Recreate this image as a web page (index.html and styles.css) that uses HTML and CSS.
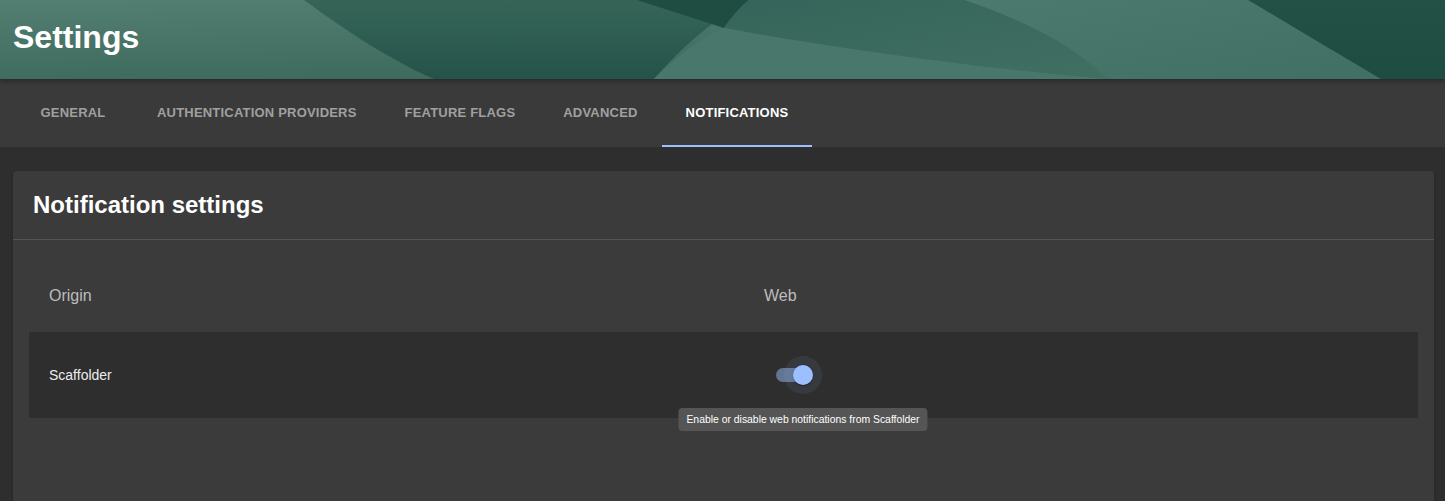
FILE: index.html
```html
<!DOCTYPE html>
<html lang="en">
<head>
<meta charset="utf-8">
<title>Settings</title>
<link rel="stylesheet" href="styles.css">
</head>
<body>
<header class="hero">
  <svg class="hero-bg" viewBox="0 0 1445 79" preserveAspectRatio="none" aria-hidden="true">
    <defs>
      <linearGradient id="g-base" x1="0" y1="0" x2="0.35" y2="1">
        <stop offset="0" stop-color="#537f73"/>
        <stop offset="1" stop-color="#3e695d"/>
      </linearGradient>
      <linearGradient id="g-band" x1="0" y1="0" x2="0" y2="1">
        <stop offset="0" stop-color="#366558"/>
        <stop offset="1" stop-color="#25534a"/>
      </linearGradient>
      <linearGradient id="g-mid" x1="0" y1="0" x2="1" y2="1">
        <stop offset="0" stop-color="#35645a"/>
        <stop offset="1" stop-color="#416f62"/>
      </linearGradient>
      <linearGradient id="g-light" x1="0" y1="0" x2="1" y2="1">
        <stop offset="0" stop-color="#4d7a6e"/>
        <stop offset="1" stop-color="#426f63"/>
      </linearGradient>
      <linearGradient id="g-dark" x1="0" y1="0" x2="0" y2="1">
        <stop offset="0" stop-color="#235145"/>
        <stop offset="1" stop-color="#1e4c40"/>
      </linearGradient>
    </defs>
    <rect x="0" y="0" width="1445" height="79" fill="url(#g-base)"/>
    <path d="M304,0 C345,30 390,60 434,79 L654,79 C678,52 706,24 749,0 Z" fill="url(#g-band)"/>
    <path d="M637,0 L724,28 C731,18 739,8 749,0 Z" fill="#1f4d41"/>
    <path d="M749,0 L965,0 C1030,22 1080,50 1107,79 C980,68 830,48 724,28 C731,18 739,8 749,0 Z" fill="url(#g-mid)"/>
    <path d="M724,28 C830,48 980,68 1107,79 L654,79 C674,58 698,40 724,28 Z" fill="#4a776b"/>
    <path d="M965,0 L1248,0 C1290,25 1340,55 1381,79 L1107,79 C1080,50 1030,22 965,0 Z" fill="url(#g-light)"/>
    <path d="M1248,0 L1445,0 L1445,79 L1381,79 C1340,55 1290,25 1248,0 Z" fill="url(#g-dark)"/>
  </svg>
  <h1 class="hero-title">Settings</h1>
</header>

<nav class="tabs">
  <div class="tab">General</div>
  <div class="tab">Authentication Providers</div>
  <div class="tab">Feature Flags</div>
  <div class="tab">Advanced</div>
  <div class="tab tab-active">Notifications</div>
</nav>

<main class="content">
  <section class="card">
    <div class="card-header">
      <h2 class="card-title">Notification settings</h2>
    </div>
    <div class="card-body">
      <div class="table">
        <div class="table-head">
          <div class="cell head-cell">Origin</div>
          <div class="cell head-cell">Web</div>
        </div>
        <div class="table-row">
          <div class="cell body-cell">Scaffolder</div>
          <div class="cell body-cell">
            <span class="switch">
              <span class="switch-track"></span>
              <span class="switch-halo"></span>
              <span class="switch-thumb"></span>
              <span class="tooltip">Enable or disable web notifications from Scaffolder</span>
            </span>
          </div>
        </div>
      </div>
    </div>
  </section>
</main>
</body>
</html>
```

FILE: styles.css
```css
* {
  box-sizing: border-box;
}

html, body {
  margin: 0;
  padding: 0;
  height: 100%;
}

body {
  background: #2e2e2e;
  font-family: "Liberation Sans", Arial, sans-serif;
  color: #ffffff;
  overflow: hidden;
}

.hero {
  position: relative;
  height: 79px;
  padding: 21px 13px 0;
  z-index: 2;
  box-shadow: 0 2px 5px rgba(0, 0, 0, 0.35);
  overflow: hidden;
}

.hero-bg {
  position: absolute;
  inset: 0;
  width: 100%;
  height: 100%;
  display: block;
}

.hero-title {
  position: relative;
  margin: 0;
  font-size: 32px;
  line-height: 32px;
  font-weight: 700;
  color: #ffffff;
}

.tabs {
  display: flex;
  height: 68px;
  padding-left: 13px;
  background: #3a3a3a;
  position: relative;
  z-index: 1;
}

.tab {
  min-width: 120px;
  padding: 0 24px;
  display: flex;
  align-items: center;
  justify-content: center;
  font-size: 13px;
  font-weight: 700;
  text-transform: uppercase;
  letter-spacing: 0.2px;
  color: #a0a0a0;
  border-bottom: 2px solid transparent;
  padding-top: 1px;
}

.tab-active {
  color: #ffffff;
  border-bottom-color: #9cbfff;
}

.content {
  padding: 24px 11px 0 13px;
}

.card {
  background: #3b3b3b;
  border-radius: 4px;
  min-height: 400px;
  box-shadow: 0 1px 3px rgba(0, 0, 0, 0.2);
}

.card-header {
  padding: 20px 20px 20px;
  border-bottom: 1px solid #545454;
}

.card-title {
  margin: 0;
  font-size: 24px;
  line-height: 28px;
  font-weight: 700;
  color: #ffffff;
}

.card-body {
  padding: 16px 16px;
}

.table-head,
.table-row {
  display: grid;
  grid-template-columns: 715px 1fr;
}

.table-head {
  height: 76px;
}

.table-row {
  height: 86px;
  background: #2e2e2e;
}

.cell {
  display: flex;
  align-items: center;
  padding: 0 20px;
}

.head-cell {
  font-size: 16px;
  color: #bdbdbd;
  padding-top: 3px;
}

.body-cell {
  font-size: 14px;
  color: #ececec;
}

.switch {
  position: relative;
  display: inline-block;
  width: 58px;
  height: 38px;
}

.switch-track {
  position: absolute;
  left: 12px;
  top: 12px;
  width: 34px;
  height: 14px;
  border-radius: 7px;
  background: #627593;
}

.switch-halo {
  position: absolute;
  left: 20px;
  top: 0;
  width: 38px;
  height: 38px;
  border-radius: 50%;
  background: rgba(156, 191, 255, 0.08);
}

.switch-thumb {
  position: absolute;
  left: 29px;
  top: 9px;
  width: 20px;
  height: 20px;
  border-radius: 50%;
  background: #9cbfff;
  box-shadow: 0 2px 1px -1px rgba(0, 0, 0, 0.2), 0 1px 1px 0 rgba(0, 0, 0, 0.14), 0 1px 3px 0 rgba(0, 0, 0, 0.12);
}

.tooltip {
  position: absolute;
  left: 39px;
  top: 52px;
  transform: translateX(-50%);
  white-space: nowrap;
  background: #555555;
  color: #ffffff;
  font-size: 10.4px;
  line-height: 15px;
  padding: 4px 8px;
  border-radius: 4px;
  z-index: 3;
}
```
